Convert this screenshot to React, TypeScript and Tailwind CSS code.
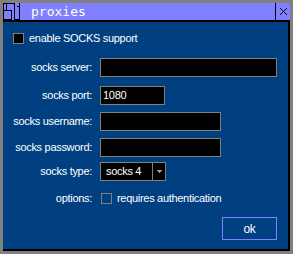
import React from "react";

// proxies dialog, old-school pixel window look

const Field = ({
  label,
  width,
  value,
  top,
}: {
  label: string;
  width: string;
  value?: string;
  top: string;
}) => (
  <div className={`flex items-center ${top}`}>
    <div className="w-[89px] text-right">{label}</div>
    <div
      className={`ml-[8px] h-[19px] ${width} bg-black border border-[#808080] pl-[2px] flex items-center text-white`}
    >
      {value}
    </div>
  </div>
);

export default function App() {
  return (
    <div
      className="w-[293px] h-[254px] bg-[#808080] p-[3px] text-white text-[11px] leading-none tracking-[-0.3px]"
      style={{ fontFamily: '"Liberation Sans", Arial, sans-serif' }}
    >
      <div className="flex flex-col h-full">
        {/* title bar */}
        <div className="h-[19px] flex bg-[#8080ff] border-b-2 border-black">
          <svg
            width="20"
            height="17"
            viewBox="0 0 20 17"
            className="shrink-0"
            shapeRendering="crispEdges"
          >
            <path
              d="M0.5 0 V17 M0 16.5 H9 M8.5 8 V17 M0 7.5 H9 M0 0.5 H3 M3.5 0 V8 M3 0.5 H11 M11.5 0 V17 M11 16.5 H17 M16.5 0 V17 M14 3.5 H17"
              stroke="black"
              strokeWidth="1"
              fill="none"
            />
          </svg>
          <div
            className="ml-[8px] text-[13px] leading-[17px] text-white tracking-normal"
            style={{ fontFamily: '"DejaVu Sans Mono", monospace' }}
          >
            proxies
          </div>
          <div className="ml-auto w-[15px] border-l border-black flex items-center justify-center">
            <svg width="9" height="9" viewBox="0 0 9 9" shapeRendering="crispEdges">
              <path d="M1 1 L8 8 M8 1 L1 8" stroke="black" strokeWidth="1" />
            </svg>
          </div>
        </div>

        {/* body */}
        <div className="flex-1 bg-[#004080] border-r-2 border-b-2 border-black pt-[10px]">
          <div className="flex items-center pl-[10px] h-[12px]">
            <div className="w-[11px] h-[11px] border border-[#808080] bg-black" />
            <span className="ml-[5px]">enable SOCKS support</span>
          </div>

          <Field label="socks server:" width="w-[177px]" top="mt-[14px]" />
          <Field label="socks port:" width="w-[65px]" value="1080" top="mt-[9px]" />
          <Field label="socks username:" width="w-[121px]" top="mt-[7px]" />
          <Field label="socks password:" width="w-[121px]" top="mt-[7px]" />

          <div className="flex items-center mt-[5px]">
            <div className="w-[89px] text-right">socks type:</div>
            <div className="ml-[8px] h-[19px] w-[66px] bg-black border border-[#808080] flex">
              <div className="flex-1 pl-[5px] flex items-center">socks 4</div>
              <div className="w-[13px] border-l border-[#808080] flex items-center justify-center">
                <svg width="5" height="3" viewBox="0 0 5 3" shapeRendering="crispEdges">
                  <path d="M0 0 H5 L2.5 3 Z" fill="#a0a0a0" />
                </svg>
              </div>
            </div>
          </div>

          <div className="flex items-center mt-[12px]">
            <div className="w-[89px] text-right">options:</div>
            <div className="ml-[9px] w-[11px] h-[11px] border border-[#808080]" />
            <span className="ml-[5px]">requires authentication</span>
          </div>

          <div className="flex justify-end pr-[11px] mt-[13px]">
            <button className="w-[55px] h-[23px] border border-[#8080ff] text-white text-[12px] flex items-center justify-center">
              ok
            </button>
          </div>
        </div>
      </div>
    </div>
  );
}
